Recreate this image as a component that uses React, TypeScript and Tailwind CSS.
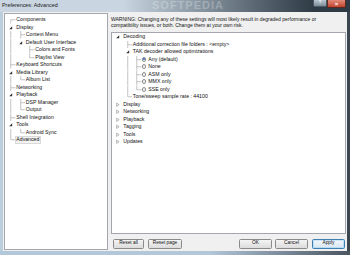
import React from 'react'

type G = '|' | 'T' | 'L' | 'F' | ' ' | 'v' | '>'

type Row = { label: string; guides: G[]; radio?: 'on' | 'off'; selected?: boolean }

const LINE = '#b4b4b4'

function Guide({ g }: { g: G }) {
  return (
    <svg width="9.5" height="7.5" viewBox="0 0 9.5 7.5" className="shrink-0 block">
      {(g === '|' || g === 'T') && <line x1="4.75" y1="0" x2="4.75" y2="7.5" stroke={LINE} strokeWidth="0.8" />}
      {g === 'L' && <line x1="4.75" y1="0" x2="4.75" y2="3.75" stroke={LINE} strokeWidth="0.8" />}
      {g === 'F' && <line x1="4.75" y1="3.75" x2="4.75" y2="7.5" stroke={LINE} strokeWidth="0.8" />}
      {(g === 'T' || g === 'L' || g === 'F') && (
        <line x1="4.75" y1="3.75" x2="9.5" y2="3.75" stroke={LINE} strokeWidth="0.8" />
      )}
      {g === 'v' && <path d="M6.2 2.3 L6.2 5.3 L3.2 5.3 Z" fill="#333" />}
      {g === '>' && <path d="M3.6 2.1 L6.1 3.75 L3.6 5.4 Z" fill="none" stroke="#8a8a8a" strokeWidth="0.6" />}
    </svg>
  )
}

function Radio({ on }: { on: boolean }) {
  return (
    <span className="w-[4.6px] h-[4.6px] rounded-full border-[0.6px] border-[#8f8f8f] bg-linear-to-b from-[#e6e6e6] to-[#ffffff] flex items-center justify-center shrink-0 mr-[1.4px]">
      {on && <span className="w-[2.2px] h-[2.2px] rounded-full bg-[#2a6ec4]" />}
    </span>
  )
}

function TreeRow({ row }: { row: Row }) {
  return (
    <div className="flex items-center h-[7.5px]">
      {row.guides.map((g, i) => (
        <Guide key={i} g={g} />
      ))}
      {row.radio && <Radio on={row.radio === 'on'} />}
      <span
        className={
          'whitespace-nowrap leading-none pl-[0.5px] pr-[1px] ' +
          (row.selected ? 'bg-[#f3f3f3] outline-[0.5px] outline-[#d9d9d9] py-[0.5px]' : '')
        }
      >
        {row.label}
      </span>
    </div>
  )
}

const leftTree: Row[] = [
  { label: 'Components', guides: ['F'] },
  { label: 'Display', guides: ['v'] },
  { label: 'Context Menu', guides: ['|', 'T'] },
  { label: 'Default User Interface', guides: ['|', 'v'] },
  { label: 'Colors and Fonts', guides: ['|', ' ', 'T'] },
  { label: 'Playlist View', guides: ['|', ' ', 'L'] },
  { label: 'Keyboard Shortcuts', guides: ['T'] },
  { label: 'Media Library', guides: ['v'] },
  { label: 'Album List', guides: ['|', 'L'] },
  { label: 'Networking', guides: ['T'] },
  { label: 'Playback', guides: ['v'] },
  { label: 'DSP Manager', guides: ['|', 'T'] },
  { label: 'Output', guides: ['|', 'L'] },
  { label: 'Shell Integration', guides: ['T'] },
  { label: 'Tools', guides: ['v'] },
  { label: 'Android Sync', guides: ['|', 'L'] },
  { label: 'Advanced', guides: ['L'], selected: true },
]

const rightTree: Row[] = [
  { label: 'Decoding', guides: ['v'] },
  { label: 'Additional correction file folders : <empty>', guides: [' ', 'T'] },
  { label: 'TAK decoder allowed optimizations', guides: [' ', 'v'] },
  { label: 'Any (default)', guides: [' ', '|', 'T'], radio: 'on' },
  { label: 'None', guides: [' ', '|', 'T'], radio: 'off' },
  { label: 'ASM only', guides: [' ', '|', 'T'], radio: 'off' },
  { label: 'MMX only', guides: [' ', '|', 'T'], radio: 'off' },
  { label: 'SSE only', guides: [' ', '|', 'L'], radio: 'off' },
  { label: 'Tone/sweep sample rate : 44100', guides: [' ', 'L'] },
  { label: 'Display', guides: ['>'] },
  { label: 'Networking', guides: ['>'] },
  { label: 'Playback', guides: ['>'] },
  { label: 'Tagging', guides: ['>'] },
  { label: 'Tools', guides: ['>'] },
  { label: 'Updates', guides: ['>'] },
]

function Btn({ label, w, primary }: { label: string; w: string; primary?: boolean }) {
  return (
    <div
      className={
        'h-[10px] rounded-[1.5px] border-[0.8px] flex items-center justify-center leading-none text-[4.8px] ' +
        w +
        (primary
          ? ' border-[#3c7fb1] bg-linear-to-b from-[#f4f8fb] to-[#d5e6f2] shadow-[inset_0_0_0_0.6px_#9fd3f3]'
          : ' border-[#8a8a8a] bg-linear-to-b from-[#f4f4f4] to-[#dcdcdc]')
      }
    >
      {label}
    </div>
  )
}

export default function App() {
  return (
    <div className="w-[350px] h-[255px] flex flex-col overflow-hidden font-['Liberation_Sans',Arial,sans-serif] text-[5.2px] text-[#111]">
      {/* title bar */}
      <div className="relative h-[12px] shrink-0 bg-linear-to-r from-[#c9d5e0] from-35% via-[#8e9ca8] via-55% to-[#2e3a44] to-90% overflow-hidden">
        <span className="absolute left-[2px] top-[2.5px] text-[5.4px] leading-none text-[#1a1a1a]">Preferences: Advanced</span>
        <span className="absolute left-[152px] top-0 text-[11px] font-bold leading-none tracking-[1px] text-white/25">
          SOFTPEDIA
        </span>
        <div className="absolute right-[23px] top-0 w-[14px] h-[7px] rounded-b-[2px] border-[0.6px] border-t-0 border-[#4a5a66] bg-linear-to-b from-[#b9c6d1] to-[#7d8c98] flex items-center justify-center text-[4.5px] text-white leading-none">
          ?
        </div>
        <div className="absolute right-[4px] top-0 w-[19px] h-[8px] rounded-b-[2px] border-[0.6px] border-t-0 border-[#5a2a22] bg-linear-to-b from-[#e08a78] to-[#c2402c] flex items-center justify-center text-[6px] font-bold text-white leading-none">
          ×
        </div>
      </div>

      <div className="flex-1 flex min-h-0">
        <div className="w-[3px] bg-[#bccddc]" />
        <div className="flex-1 bg-[#f0f0f0] flex items-stretch py-[1px]">
          {/* left tree */}
          <div className="ml-[1px] w-[104px] bg-white border-[0.8px] border-[#a3a7ad] pt-[2.3px] pl-[1.3px]">
            {leftTree.map((r, i) => (
              <TreeRow key={i} row={r} />
            ))}
          </div>

          {/* right column */}
          <div className="ml-[3px] w-[235px] flex flex-col">
            <div className="pt-[2.5px] leading-[6px] whitespace-nowrap text-[5px]">
              <div>WARNING: Changing any of these settings will most likely result in degraded performance or</div>
              <div>compatibility issues, or both. Change them at your own risk.</div>
            </div>
            <div className="mt-[4px] h-[202px] bg-white border-[0.8px] border-[#a3a7ad] pt-[0.5px] pl-[1.3px]">
              {rightTree.map((r, i) => (
                <TreeRow key={i} row={r} />
              ))}
            </div>
            <div className="mt-[5px] flex items-center">
              <div className="ml-[2px]">
                <Btn label="Reset all" w="w-[31px]" />
              </div>
              <div className="ml-[4px]">
                <Btn label="Reset page" w="w-[34px]" />
              </div>
              <div className="flex-1" />
              <Btn label="OK" w="w-[33px]" />
              <div className="ml-[3px]">
                <Btn label="Cancel" w="w-[33px]" />
              </div>
              <div className="ml-[4px] mr-[1px]">
                <Btn label="Apply" w="w-[33px]" primary />
              </div>
            </div>
          </div>
        </div>
        <div className="w-[3px] bg-[#3b4650]" />
      </div>
      <div className="h-[4px] shrink-0 bg-linear-to-r from-[#b3c7da] from-60% to-[#4a5560]" />
    </div>
  )
}
